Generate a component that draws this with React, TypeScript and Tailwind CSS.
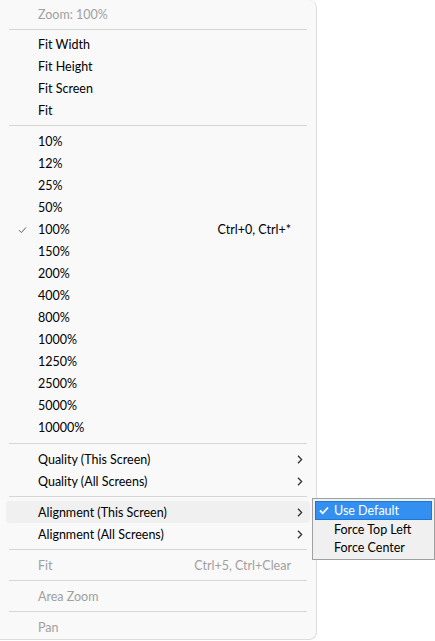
import React from 'react';

type Item =
  | { kind: 'sep'; h: number }
  | { kind: 'item'; label: string; shortcut?: string; disabled?: boolean; checked?: boolean; sub?: boolean; active?: boolean };

const items: Item[] = [
  { kind: 'item', label: 'Zoom: 100%', disabled: true },
  { kind: 'sep', h: 8 },
  { kind: 'item', label: 'Fit Width' },
  { kind: 'item', label: 'Fit Height' },
  { kind: 'item', label: 'Fit Screen' },
  { kind: 'item', label: 'Fit' },
  { kind: 'sep', h: 9 },
  ...['10%', '12%', '25%', '50%'].map((l) => ({ kind: 'item' as const, label: l })),
  { kind: 'item', label: '100%', checked: true, shortcut: 'Ctrl+0, Ctrl+*' },
  ...['150%', '200%', '400%', '800%', '1000%', '1250%', '2500%', '5000%', '10000%'].map((l) => ({ kind: 'item' as const, label: l })),
  { kind: 'sep', h: 10 },
  { kind: 'item', label: 'Quality (This Screen)', sub: true },
  { kind: 'item', label: 'Quality (All Screens)', sub: true },
  { kind: 'sep', h: 9 },
  { kind: 'item', label: 'Alignment (This Screen)', sub: true, active: true },
  { kind: 'item', label: 'Alignment (All Screens)', sub: true },
  { kind: 'sep', h: 9 },
  { kind: 'item', label: 'Fit', disabled: true, shortcut: 'Ctrl+5, Ctrl+Clear' },
  { kind: 'sep', h: 9 },
  { kind: 'item', label: 'Area Zoom', disabled: true },
  { kind: 'sep', h: 9 },
  { kind: 'item', label: 'Pan', disabled: true },
];

function Check() {
  return (
    <svg width="9" height="8" viewBox="0 0 9 8" className="absolute left-[12px] top-[8px]">
      <path d="M1 4.2 L3.4 6.6 L8 1.4" fill="none" stroke="#606060" strokeWidth="1" />
    </svg>
  );
}

function Chevron() {
  return (
    <svg width="6" height="9" viewBox="0 0 6 9" className="absolute left-[291px] top-[7px]">
      <path d="M1 0.8 L4.6 4.5 L1 8.2" fill="none" stroke="#333" strokeWidth="1.3" />
    </svg>
  );
}

export default function App() {
  return (
    <div
      className="relative w-[435px] h-[641px] bg-white overflow-hidden text-[12.5px]"
      style={{ fontFamily: 'Lato, "Noto Sans", sans-serif' }}
    >
      <div className="w-[317px] h-[640px] bg-[#f9f9f9] border-r border-b border-[#dcdcdc] rounded-r-[8px] pt-[3px] flex flex-col">
        {items.map((it, i) =>
          it.kind === 'sep' ? (
            <div key={i} className="flex items-center px-[9px]" style={{ height: it.h }}>
              <div className="h-px w-full bg-[#d6d6d6]" />
            </div>
          ) : (
            <div key={i} className="px-[6px]">
              <div
                className={`relative h-[22px] flex items-center rounded-[4px] pt-[2px] ${it.active ? 'bg-[#f0f0f0]' : ''} ${
                  it.disabled ? 'text-[#a0a0a0]' : 'text-black'
                }`}
              >
                {it.checked && <Check />}
                <span className="pl-[32px] leading-none">{it.label}</span>
                {it.shortcut && <span className="absolute right-[19px] leading-none">{it.shortcut}</span>}
                {it.sub && <Chevron />}
              </div>
            </div>
          )
        )}
      </div>

      <div className="absolute left-[312px] top-[498px] w-[123px] h-[62px] bg-[#f0f0f0] border border-[#a0a0a0] p-[2px] flex flex-col">
        <div className="relative h-[19px] bg-[#3390f0] border border-[#1a78d8] text-white flex items-center pt-[2px]">
          <svg width="10" height="9" viewBox="0 0 10 9" className="absolute left-[3px] top-[4px]">
            <path d="M1 4.5 L3.8 7.3 L9 1.5" fill="none" stroke="#fff" strokeWidth="1.8" />
          </svg>
          <span className="pl-[18px] leading-none">Use Default</span>
        </div>
        <div className="h-[19px] flex items-center pl-[19px] pt-[2px] text-black leading-none">Force Top Left</div>
        <div className="h-[19px] flex items-center pl-[19px] pt-[2px] text-black leading-none">Force Center</div>
      </div>
    </div>
  );
}
